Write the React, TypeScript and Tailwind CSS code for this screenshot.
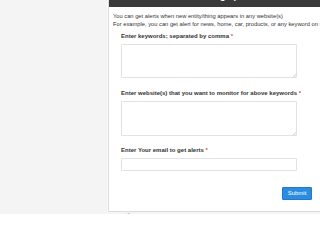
import { useState } from 'react';

const Label = ({ text }: { text: string }) => (
  <div className="h-[8px] leading-[8px] text-[6px] font-bold text-[#333] whitespace-nowrap">
    {text} <span className="text-[#e0532f]">*</span>
  </div>
);

const ResizeGrip = () => (
  <svg className="absolute right-[1px] bottom-[1px]" width="3" height="3" viewBox="0 0 3 3">
    <path d="M0 3 L3 0 M1.5 3 L3 1.5" stroke="#b5b5b5" strokeWidth="0.5" />
  </svg>
);

const App = () => {
  const [keywords, setKeywords] = useState('');
  const [sites, setSites] = useState('');
  const [email, setEmail] = useState('');

  return (
    <div className="w-[320px] h-[214px] overflow-hidden bg-[#f4f4f4] flex font-['Liberation_Sans',Arial,sans-serif]">
      <div className="w-[108px] shrink-0 border-r border-[#fbfbfb]" />

      <div className="flex-1 flex flex-col min-w-0">
        {/* Panel */}
        <div className="h-[212px] shrink-0 bg-white border-l border-b border-[#dcdcdc] flex flex-col">
          {/* Header */}
          <div className="h-[7px] bg-[#3a3a3a] overflow-hidden relative">
            <div className="absolute left-[86px] top-[-9px] text-[9px] leading-[11px] font-bold text-white whitespace-nowrap">
              Setting up Alerts
            </div>
          </div>

          {/* Body */}
          <div className="pl-[4px] pt-[5px] text-[5.75px] leading-[8px] text-[#333] whitespace-nowrap">
            <p>You can get alerts when new entity/thing appears in any website(s)</p>
            <p>For example, you can get alert for news, home, car, products, or any keyword on specific website(s)</p>
          </div>

          <form className="pl-[11px] pr-[8px] flex flex-col" onSubmit={(e) => e.preventDefault()}>
            <div className="mt-[4px] pl-[1px]">
              <Label text="Enter keywords; separated by comma" />
            </div>
            <div className="relative mt-[4px] ml-[1px] w-[176px] h-[34px]">
              <textarea
                value={keywords}
                onChange={(e) => setKeywords(e.target.value)}
                className="w-full h-full resize-none border border-[#e2e2e2] rounded-[1px] outline-none block"
              />
              <ResizeGrip />
            </div>

            <div className="mt-[11px] pl-[1px]">
              <Label text="Enter website(s) that you want to monitor for above keywords" />
            </div>
            <div className="relative mt-[4px] ml-[1px] w-[176px] h-[35px]">
              <textarea
                value={sites}
                onChange={(e) => setSites(e.target.value)}
                className="w-full h-full resize-none border border-[#e2e2e2] rounded-[1px] outline-none block"
              />
              <ResizeGrip />
            </div>

            <div className="mt-[10px] pl-[1px]">
              <Label text="Enter Your email to get alerts" />
            </div>
            <input
              value={email}
              onChange={(e) => setEmail(e.target.value)}
              className="mt-[4px] ml-[1px] w-[176px] h-[13px] border border-[#e2e2e2] rounded-[1px] outline-none"
            />

            <div className="mt-[16px] flex justify-end">
              <button
                type="submit"
                className="w-[30px] h-[13px] bg-[#2b8de0] border border-[#2479c6] rounded-[1px] text-white text-[6px] leading-[11px] text-center"
              >
                Submit
              </button>
            </div>
          </form>
        </div>

        {/* Footer */}
        <div className="pt-[1px] text-[5px] leading-[6px] text-[#555] whitespace-nowrap -ml-[4px]">
          Copyright © 2017 AlertThing. All rights reserved.
        </div>
      </div>
    </div>
  );
};

export default App;
